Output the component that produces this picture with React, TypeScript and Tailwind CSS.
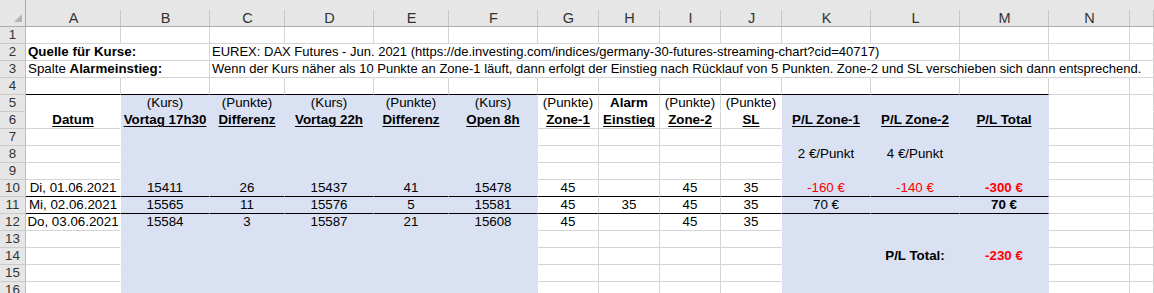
import type { ReactNode } from 'react'

// ── Types ────────────────────────────────────────────────────────────────────

type Cell = {
  t?: ReactNode
  b?: boolean
  u?: boolean
  red?: boolean
  left?: boolean
  small?: boolean
}

// ── Sheet data ───────────────────────────────────────────────────────────────

const COLS = ['A', 'B', 'C', 'D', 'E', 'F', 'G', 'H', 'I', 'J', 'K', 'L', 'M', 'N', '']
const ROW_COUNT = 16

const h = (t: string): Cell => ({ t, b: true, u: true })

const DATA: Record<number, Record<number, Cell>> = {
  2: {
    0: { t: 'Quelle für Kurse:', b: true, left: true },
    2: {
      t: 'EUREX: DAX Futures - Jun. 2021 (https://de.investing.com/indices/germany-30-futures-streaming-chart?cid=40717)',
      left: true,
      small: true,
    },
  },
  3: {
    0: { t: <>Spalte <b>Alarmeinstieg:</b></>, left: true },
    2: {
      t: 'Wenn der Kurs näher als 10 Punkte an Zone-1 läuft, dann erfolgt der Einstieg nach Rücklauf von 5 Punkten. Zone-2 und SL verschieben sich dann entsprechend.',
      left: true,
      small: true,
    },
  },
  5: {
    1: { t: '(Kurs)' },
    2: { t: '(Punkte)' },
    3: { t: '(Kurs)' },
    4: { t: '(Punkte)' },
    5: { t: '(Kurs)' },
    6: { t: '(Punkte)' },
    7: { t: 'Alarm', b: true },
    8: { t: '(Punkte)' },
    9: { t: '(Punkte)' },
  },
  6: {
    0: h('Datum'),
    1: h('Vortag 17h30'),
    2: h('Differenz'),
    3: h('Vortag 22h'),
    4: h('Differenz'),
    5: h('Open 8h'),
    6: h('Zone-1'),
    7: h('Einstieg'),
    8: h('Zone-2'),
    9: h('SL'),
    10: h('P/L Zone-1'),
    11: h('P/L Zone-2'),
    12: h('P/L Total'),
  },
  8: {
    10: { t: '2 €/Punkt' },
    11: { t: '4 €/Punkt' },
  },
  10: {
    0: { t: 'Di, 01.06.2021' },
    1: { t: '15411' },
    2: { t: '26' },
    3: { t: '15437' },
    4: { t: '41' },
    5: { t: '15478' },
    6: { t: '45' },
    8: { t: '45' },
    9: { t: '35' },
    10: { t: '-160 €', red: true },
    11: { t: '-140 €', red: true },
    12: { t: '-300 €', red: true, b: true },
  },
  11: {
    0: { t: 'Mi, 02.06.2021' },
    1: { t: '15565' },
    2: { t: '11' },
    3: { t: '15576' },
    4: { t: '5' },
    5: { t: '15581' },
    6: { t: '45' },
    7: { t: '35' },
    8: { t: '45' },
    9: { t: '35' },
    10: { t: '70 €' },
    12: { t: '70 €', b: true },
  },
  12: {
    0: { t: 'Do, 03.06.2021' },
    1: { t: '15584' },
    2: { t: '3' },
    3: { t: '15587' },
    4: { t: '21' },
    5: { t: '15608' },
    6: { t: '45' },
    8: { t: '45' },
    9: { t: '35' },
  },
  14: {
    11: { t: 'P/L Total:', b: true },
    12: { t: '-230 €', b: true, red: true },
  },
}

// Columns whose right gridline is covered by overflowing text
const OVERFLOW: Record<number, number[]> = {
  2: [0, 2, 3, 4, 5, 6, 7, 8, 9, 10],
  3: [0, 2, 3, 4, 5, 6, 7, 8, 9, 10, 11, 12, 13],
}

// ── Helpers ──────────────────────────────────────────────────────────────────

function isFilled(r: number, c: number) {
  return r >= 5 && ((c >= 1 && c <= 5) || (c >= 10 && c <= 12))
}

function isBlackBottom(r: number, c: number) {
  return (r === 4 || r === 10 || r === 11) && c <= 12
}

// ── Component ────────────────────────────────────────────────────────────────

export default function App() {
  const rows = Array.from({ length: ROW_COUNT }, (_, i) => i + 1)

  return (
    <div className="w-[1154px] h-[293px] overflow-hidden bg-white font-['Liberation_Sans',Arial,sans-serif] text-[13.33px] text-black">
      <div className="grid grid-cols-[26px_95px_89px_75px_89px_75px_89px_61px_61px_61px_61px_89px_89px_89px_81px_1fr]">

        {/* Column header row */}
        <div className="relative h-[27px] bg-[#e6e6e6] border-b border-r border-[#ababab]">
          <svg className="absolute left-0 top-0" width="25" height="26" viewBox="0 0 25 26">
            <polygon points="14,22 22,22 22,14" fill="#b5b5b5" />
          </svg>
        </div>
        {COLS.map((c, i) => (
          <div
            key={'h' + i}
            className="relative h-[27px] bg-[#e6e6e6] border-b border-[#ababab] text-center text-[14.5px] leading-[16px] pt-[10px] text-[#333] after:absolute after:right-0 after:top-[10px] after:bottom-0 after:w-px after:bg-[#c6c6c6]"
          >
            {c}
          </div>
        ))}

        {/* Sheet rows */}
        {rows.map(r => (
          <Row key={r} r={r} />
        ))}
      </div>
    </div>
  )
}

// ── Small sub-components ─────────────────────────────────────────────────────

function Row({ r }: { r: number }) {
  return (
    <>
      <div className="h-[17px] bg-[#e6e6e6] border-b border-r border-b-[#cacaca] border-r-[#bdbdbd] text-center leading-[16px] text-[#333]">
        {r}
      </div>
      {COLS.map((_, c) => {
        const cell = DATA[r]?.[c]
        const filled = isFilled(r, c)
        const hideRight = filled || isFilled(r, c + 1) || (OVERFLOW[r] ?? []).includes(c)
        const black = isBlackBottom(r, c)
        const hideBottom = !black && (r === 5 || filled || isFilled(r + 1, c))

        return (
          <div
            key={c}
            className={[
              'relative h-[17px] border-r border-b flex whitespace-nowrap leading-[16px]',
              cell?.left ? 'justify-start pl-[2px] z-10' : 'justify-center',
              filled ? 'bg-[#d9e1f2]' : '',
              hideRight ? 'border-r-transparent' : 'border-r-[#d4d4d4]',
              black ? 'border-b-black' : hideBottom ? 'border-b-transparent' : 'border-b-[#d4d4d4]',
            ].join(' ')}
          >
            {cell?.t !== undefined && (
              <span
                className={[
                  cell.small ? 'text-[13px]' : '',
                  cell.b ? 'font-bold' : '',
                  cell.u ? 'underline decoration-1 underline-offset-[2px]' : '',
                  cell.red ? 'text-[#ff0000]' : '',
                ].join(' ')}
              >
                {cell.t}
              </span>
            )}
          </div>
        )
      })}
    </>
  )
}
